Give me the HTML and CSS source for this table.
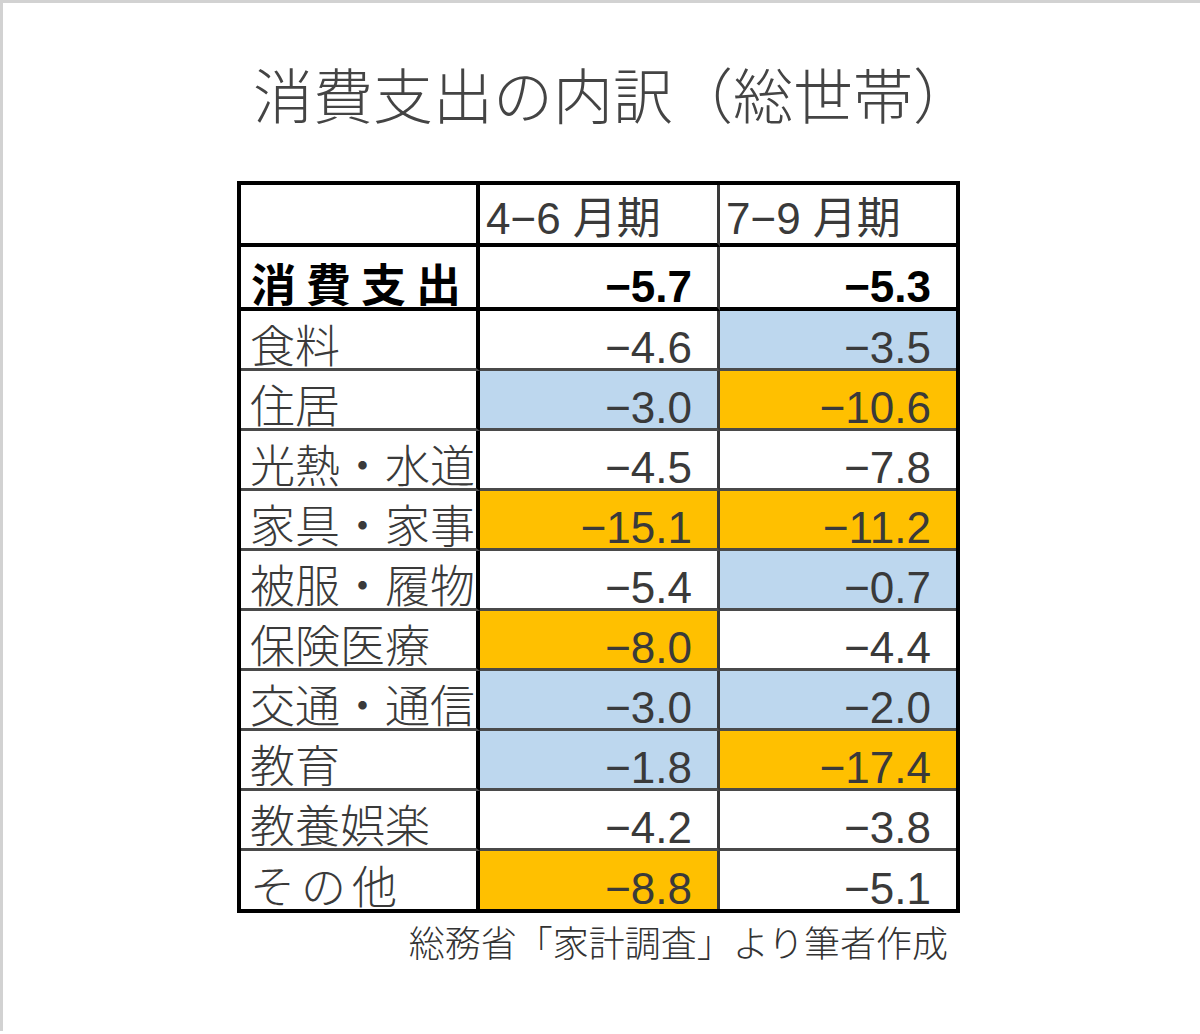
FILE: index.html
```html
<!DOCTYPE html>
<html lang="ja">
<head>
<meta charset="utf-8">
<title>消費支出の内訳（総世帯）</title>
<link rel="stylesheet" href="styles.css">
</head>
<body>
<div class="page">
  <div class="content">
    <h1 class="title">消費支出の内訳（総世帯）</h1>
    <div class="grid">
      <div class="cell head lab"></div>
      <div class="cell head c2 hd">4−6 月期</div>
      <div class="cell head c3 hd">7−9 月期</div>

      <div class="cell main lab bold">消費支出</div>
      <div class="cell main c2 num bold">−5.7</div>
      <div class="cell main c3 num bold">−5.3</div>

      <div class="cell lab">食料</div>
      <div class="cell c2 num">−4.6</div>
      <div class="cell c3 num blue">−3.5</div>

      <div class="cell lab">住居</div>
      <div class="cell c2 num blue">−3.0</div>
      <div class="cell c3 num orange">−10.6</div>

      <div class="cell lab">光熱・水道</div>
      <div class="cell c2 num">−4.5</div>
      <div class="cell c3 num">−7.8</div>

      <div class="cell lab">家具・家事</div>
      <div class="cell c2 num orange">−15.1</div>
      <div class="cell c3 num orange">−11.2</div>

      <div class="cell lab">被服・履物</div>
      <div class="cell c2 num">−5.4</div>
      <div class="cell c3 num blue">−0.7</div>

      <div class="cell lab">保険医療</div>
      <div class="cell c2 num orange">−8.0</div>
      <div class="cell c3 num">−4.4</div>

      <div class="cell lab">交通・通信</div>
      <div class="cell c2 num blue">−3.0</div>
      <div class="cell c3 num blue">−2.0</div>

      <div class="cell lab">教育</div>
      <div class="cell c2 num blue">−1.8</div>
      <div class="cell c3 num orange">−17.4</div>

      <div class="cell lab">教養娯楽</div>
      <div class="cell c2 num">−4.2</div>
      <div class="cell c3 num">−3.8</div>

      <div class="cell last lab spaced">その他</div>
      <div class="cell last c2 num orange">−8.8</div>
      <div class="cell last c3 num">−5.1</div>
    </div>
    <p class="source">総務省「家計調査」より筆者作成</p>
  </div>
</div>
</body>
</html>
```
FILE: styles.css
```css
html, body {
  margin: 0;
  padding: 0;
  background: #fff;
}
body {
  font-family: "Liberation Sans", "Noto Sans CJK JP", sans-serif;
  color: #3a3a3a;
}
.page {
  border-top: 3px solid #d2d2d2;
  border-left: 3px solid #d2d2d2;
  min-height: 1031px;
  box-sizing: border-box;
}
.content {
  width: 723px;
  margin-left: 234px;
  padding-top: 60px;
}
.title {
  margin: 0;
  padding-left: 16px;
  font-family: "Noto Sans CJK JP", sans-serif;
  font-weight: 300;
  font-size: 60px;
  line-height: 60px;
  text-align: center;
  color: #444;
  white-space: nowrap;
}
.grid {
  margin-top: 58px;
  border: 4px solid #000;
  display: grid;
  grid-template-columns: 239px 240px 236px;
  grid-template-rows: 62px 64px repeat(9, 60px) 58px;
}
.cell {
  box-sizing: border-box;
  display: flex;
  align-items: flex-end;
  border-bottom: 3px solid #4a4a4a;
  border-right: 4px solid #000;
  white-space: nowrap;
}
.cell.c2 {
  border-right: 3px solid #3a3a3a;
}
.cell.c3 {
  border-right: none;
}
.cell.head,
.cell.main {
  border-bottom: 4px solid #000;
}
.cell.last {
  border-bottom: none;
}
.lab {
  font-family: "Noto Sans CJK JP", sans-serif;
  font-weight: 300;
  font-size: 45px;
  line-height: 45px;
  padding-left: 9px;
  padding-bottom: 2px;
}
.lab.spaced {
  letter-spacing: 6px;
}
.hd {
  font-size: 44px;
  line-height: 44px;
  padding-left: 6px;
  padding-bottom: 2px;
}
.num {
  justify-content: flex-end;
  font-size: 44px;
  line-height: 40px;
  padding-right: 25px;
}
.bold {
  font-weight: 700;
  color: #000;
}
.lab.bold {
  font-weight: 700;
  letter-spacing: 10px;
  padding-left: 10px;
}
.blue {
  background: #bdd7ee;
}
.orange {
  background: #ffc000;
}
.source {
  margin: 10px 0 0;
  padding-right: 12px;
  text-align: right;
  font-family: "Noto Sans CJK JP", sans-serif;
  font-weight: 300;
  font-size: 36px;
  line-height: 36px;
  color: #333;
  white-space: nowrap;
}
```
